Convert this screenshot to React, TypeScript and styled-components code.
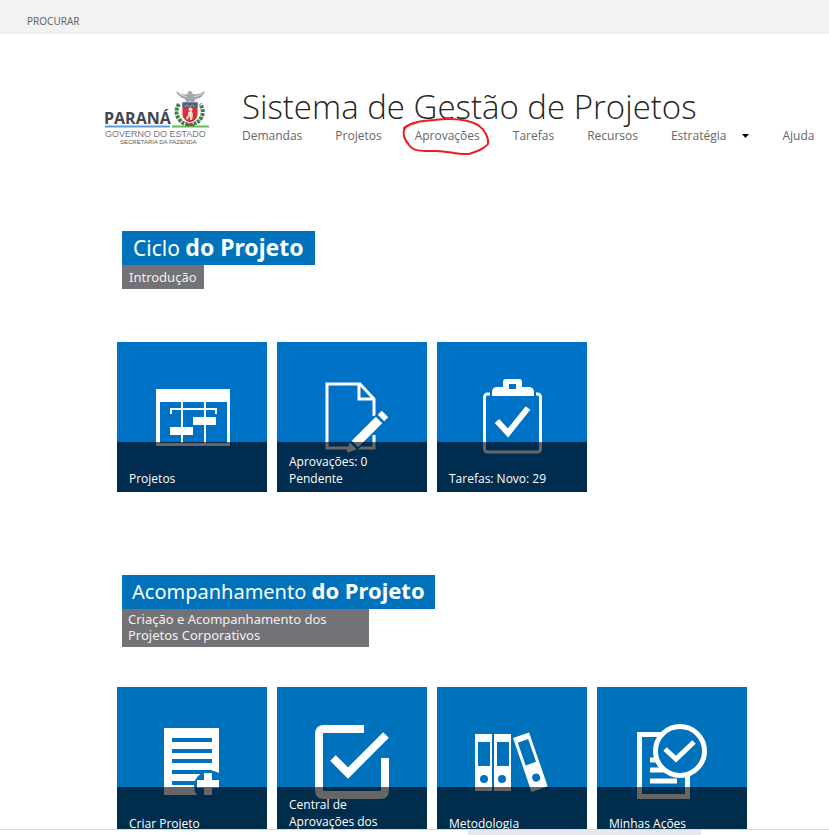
import React from "react";
import styled, { createGlobalStyle } from "styled-components";

const GlobalStyle = createGlobalStyle`
  *, *::before, *::after { box-sizing: border-box; }
  body {
    margin: 0;
    background: #fff;
    color: #262626;
    font-family: "Open Sans", "Noto Sans", sans-serif;
    font-size: 12px;
  }
  h1, h2, p, ul { margin: 0; padding: 0; font-weight: inherit; }
  ul { list-style: none; }
  a { color: inherit; text-decoration: none; }
`;

const Shell = styled.div`
  display: flex;
  flex-direction: column;
  height: 100vh;
  overflow: hidden;
`;

const Ribbon = styled.div`
  flex: none;
  display: flex;
  align-items: flex-end;
  height: 34px;
  padding: 0 20px 4px;
  background: #f2f2f2;
`;

const RibbonTab = styled.button`
  border: 0;
  background: none;
  padding: 0 7px;
  color: #666;
  font: 10px/18px "Noto Sans", sans-serif;
  text-transform: uppercase;
`;

const Page = styled.main`
  flex: 1;
  min-height: 0;
  overflow: hidden;
`;

const Header = styled.header`
  display: flex;
  align-items: flex-start;
  gap: 30px;
  padding: 52px 0 0 102px;
`;

const LogoLink = styled.a`
  flex: none;
  display: block;
  padding-top: 2px;
  svg { display: block; }
`;

const Heading = styled.div`
  min-width: 0;
`;

const Title = styled.h1`
  font-size: 33px;
  font-weight: 300;
  line-height: 41px;
  white-space: nowrap;
`;

const NavList = styled.ul`
  display: flex;
  gap: 33px;
  line-height: 17px;
  color: #666;
  white-space: nowrap;
`;

const NavItem = styled.li`
  position: relative;
  display: flex;
  align-items: center;
  gap: 16px;
`;

const SubmenuButton = styled.button`
  display: flex;
  padding: 0;
  border: 0;
  background: none;
`;

const InkMark = styled.svg`
  position: absolute;
  left: -14px;
  top: -12px;
  pointer-events: none;
`;

const Section = styled.section<{ $top: number }>`
  padding: ${(p) => p.$top}px 0 0 117px;
`;

const Banner = styled.div`
  display: flex;
  flex-direction: column;
  align-items: flex-start;
  padding-left: 5px;
  color: #fff;
  font-family: "Noto Sans", sans-serif;
`;

const BannerTitle = styled.h2<{ $compact?: boolean }>`
  padding: 0 ${(p) => (p.$compact ? 10 : 11)}px;
  background: #0072bc;
  font-size: ${(p) => (p.$compact ? 20 : 21)}px;
  line-height: 34px;
  white-space: nowrap;
  b {
    font-size: ${(p) => (p.$compact ? 22 : 23)}px;
    line-height: 20px;
  }
`;

const BannerNote = styled.p<{ $wide?: boolean }>`
  width: ${(p) => (p.$wide ? "247px" : "auto")};
  padding: ${(p) => (p.$wide ? "2px 6px 4px" : "4px 7px")};
  background: #737277;
  color: #f0f0f0;
  font-size: 13px;
  line-height: 16px;
`;

const Tiles = styled.ul<{ $top: number }>`
  display: flex;
  gap: 10px;
  padding-top: ${(p) => p.$top}px;
`;

const Tile = styled.a<{ $color: string }>`
  position: relative;
  display: block;
  width: 150px;
  height: 150px;
  background: ${(p) => p.$color};
  color: ${(p) => p.$color};
  svg { display: block; }
`;

const Caption = styled.span`
  position: absolute;
  inset: auto 0 0 0;
  display: flex;
  align-items: flex-end;
  height: 50px;
  padding: 0 12px 5px;
  background: rgba(0, 0, 0, 0.6);
  color: #fff;
  line-height: 17px;
`;

const CaptionText = styled.span`
  max-width: 100px;
`;

const LowCaption = styled(Caption)`
  align-items: flex-start;
  padding-top: 9px;
`;

const Footer = styled.div`
  flex: none;
  height: 6px;
  padding-left: 468px;
  border-top: 1px solid #dcdcdc;
`;

const ScrollThumb = styled.div`
  width: 233px;
  height: 5px;
  background: #e8e8ec;
`;

function ParanaLogo() {
  return (
    <svg width="110" height="58" viewBox="0 0 110 58" role="img" aria-label="Paraná - Governo do Estado - Secretaria da Fazenda">
      <text x="2" y="36" fontFamily="Open Sans, sans-serif" fontWeight="700" fontSize="16" fill="#3f464e">PARANÁ</text>
      <rect x="3" y="37.5" width="65" height="2" fill="#5a9bd8" />
      <rect x="70" y="37.5" width="37" height="2" fill="#62ba5c" />
      <text x="3" y="49" fontFamily="Liberation Sans, sans-serif" fontSize="9" fill="#73777b">GOVERNO DO ESTADO</text>
      <text x="18" y="56" fontFamily="Liberation Sans, sans-serif" fontSize="6" fill="#55585b">SECRETARIA DA FAZENDA</text>
      <path d="M77 16Q72 24 77 31Q81 37 88 36Q96 36 99 30Q103 23 98 16" fill="none" stroke="#3f7f49" strokeWidth="4" strokeDasharray="3 1" />
      <path d="M88 35L86 38M88 35L92 38" stroke="#a43c35" strokeWidth="2" />
      <path d="M80 14H96V27Q95 33 88 35Q81 33 80 27Z" fill="#d72f35" stroke="#f2f2f2" />
      <path d="M80.500 14.500H95.500V19.500H80.500Z" fill="#3763a1" />
      <path d="M83 19Q85 15 87 19M88 19Q90 15 93 19" fill="none" stroke="#d4a55e" />
      <circle cx="88.500" cy="21.500" r="2" fill="#f8d8d3" />
      <path d="M86 24L90 23L91 27L90 32H88L88 28L85 32L84 30L86 27Z" fill="#f8d8d3" />
      <path d="M74 3Q81 8 85 6L87 3L89 3L91 6Q96 7 103 3Q101 10 94 11L91 15L88 13L85 15L83 11Q76 9 74 3Z" fill="#a5a8aa" />
      <path d="M77 6L85 9M100 6L92 9" stroke="#d9dbdc" />
    </svg>
  );
}

type IconName = "gantt" | "edit" | "clipboard" | "create" | "check" | "binders" | "review";

const drawings: Record<IconName, React.ReactNode> = {
  gantt: (
    <>
      <path fill="#fff" fillRule="evenodd" d="M39 47H113V104H39ZM43 60V101H110V60Z" />
      <path d="M65 60V76M65 93V101M88 60V75M88 83V101" stroke="#fff" strokeWidth="2" />
      <path d="M65 76V85" stroke="#fff" strokeWidth="2" />
      <path d="M54 72V67H99V72" fill="none" stroke="#fff" strokeWidth="2" />
      <path d="M53 85H76V93H53ZM76 75H99V83H76Z" fill="#fff" />
    </>
  ),
  edit: (
    <>
      <path d="M97 74V57L83 42H50V106H97V93" fill="none" stroke="#fff" strokeWidth="3" />
      <path d="M82 42V57H97" fill="none" stroke="#fff" strokeWidth="3" />
      <path d="M73 107L108 72" stroke="currentColor" strokeWidth="12" />
      <path d="M78 102L102 78" stroke="#fff" strokeWidth="9" />
      <path d="M104 76L108 72" stroke="#fff" strokeWidth="9" />
      <path d="M73 101L79 107L71 110L70 109Z" fill="#fff" stroke="#fff" />
    </>
  ),
  clipboard: (
    <>
      <rect x="47.500" y="52" width="56" height="58" rx="3" fill="none" stroke="#fff" strokeWidth="3" />
      <path d="M53 48H99V56H53Z" fill="currentColor" />
      <path fill="#fff" fillRule="evenodd" d="M55 54V49Q56 45 60 45H66V40Q66 37 69 37H82Q85 37 85 40V45H92Q96 45 97 49V54ZM72 42V47H79V42Z" />
      <path d="M60 79L71 91L91 66" fill="none" stroke="#fff" strokeWidth="6" />
    </>
  ),
  create: (
    <>
      <path d="M47 41H102V108H47Z" fill="#fff" />
      <path d="M55 53H95M55 64H95M55 74H95M55 85H95M55 96H95" stroke="currentColor" strokeWidth="4" />
      <path d="M102 86Q94 81 85 86Q77 91 77 99Q77 104 80 108H102Z" fill="currentColor" />
      <path d="M80 97H102M91 86V108" stroke="#fff" strokeWidth="8" />
    </>
  ),
  check: (
    <>
      <path d="M87 42H47Q42 42 42 47V103Q42 108 47 108H103Q108 108 108 103V71" fill="none" stroke="#fff" strokeWidth="8" />
      <path d="M56 71L71 86L109 48" fill="none" stroke="#fff" strokeWidth="8" />
    </>
  ),
  binders: (
    <>
      <path fill="#fff" fillRule="evenodd" d="M38 47H55V104H38ZM41 55V79H53V55ZM57 47H74V104H57ZM60 55V79H72V55Z" />
      <circle cx="47" cy="92" r="4" fill="currentColor" />
      <circle cx="65" cy="92" r="4" fill="currentColor" />
      <g transform="translate(76 51) rotate(-19)">
        <path d="M0 0H17V57H0Z" fill="#fff" />
        <path d="M3 6H14V30H3Z" fill="currentColor" />
        <circle cx="9" cy="45" r="4" fill="currentColor" />
      </g>
    </>
  ),
  review: (
    <>
      <path d="M42.500 47.500H90.500V109.500H42.500Z" fill="none" stroke="#fff" strokeWidth="5" />
      <path d="M53 73H64M53 83H72M53 94H80" stroke="#fff" strokeWidth="5" />
      <circle cx="83" cy="64" r="24.500" fill="currentColor" stroke="#fff" strokeWidth="5" />
      <path d="M68 62L79 72L97 55" fill="none" stroke="#fff" strokeWidth="5" />
    </>
  ),
};

interface TileData {
  icon: IconName;
  label: string;
  low?: boolean;
}

const cycle: TileData[] = [
  { icon: "gantt", label: "Projetos" },
  { icon: "edit", label: "Aprovações: 0 Pendente" },
  { icon: "clipboard", label: "Tarefas: Novo: 29" },
];

const tracking: TileData[] = [
  { icon: "create", label: "Criar Projeto" },
  { icon: "check", label: "Central de Aprovações dos", low: true },
  { icon: "binders", label: "Metodologia" },
  { icon: "review", label: "Minhas Ações" },
];

function TileRow({ items, color, top }: { items: TileData[]; color: string; top: number }) {
  return (
    <Tiles $top={top}>
      {items.map(({ icon, label, low }) => {
        const Label = low ? LowCaption : Caption;
        return (
          <li key={label}>
            <Tile href="#" $color={color}>
              <svg width="150" height="150" viewBox="0 0 150 150" aria-hidden="true">
                {drawings[icon]}
              </svg>
              <Label><CaptionText>{label}</CaptionText></Label>
            </Tile>
          </li>
        );
      })}
    </Tiles>
  );
}

const navigation = ["Demandas", "Projetos", "Aprovações", "Tarefas", "Recursos", "Estratégia", "Ajuda"];

export default function App() {
  return (
    <>
      <GlobalStyle />
      <Shell>
        <Ribbon>
          <RibbonTab type="button">Procurar</RibbonTab>
        </Ribbon>
        <Page>
          <Header>
            <LogoLink href="#"><ParanaLogo /></LogoLink>
            <Heading>
              <Title>Sistema de Gestão de Projetos</Title>
              <nav>
                <NavList>
                  {navigation.map((name) => (
                    <NavItem key={name}>
                      <a href="#">{name}</a>
                      {name === "Estratégia" && (
                        <SubmenuButton type="button" aria-label="Abrir submenu de Estratégia">
                          <svg width="7" height="4" viewBox="0 0 7 4"><path d="M0 0H7L3.500 4Z" fill="#000" /></svg>
                        </SubmenuButton>
                      )}
                      {name === "Aprovações" && (
                        <InkMark width="92" height="42" viewBox="0 0 92 42" aria-hidden="true">
                          <path d="M3 13C10 7 20 6 33 5C50 3 66 4 77 10C84 15 88 23 87 29C83 34 77 36 68 39C57 40 47 36 36 36C22 36 13 37 8 30C2 23 1 16 5 12C10 8 14 8 18 7" fill="none" stroke="#ed1c24" strokeWidth="2" strokeLinecap="round" />
                        </InkMark>
                      )}
                    </NavItem>
                  ))}
                </NavList>
              </nav>
            </Heading>
          </Header>

          <Section $top={85}>
            <Banner>
              <BannerTitle>Ciclo <b>do Projeto</b></BannerTitle>
              <BannerNote>Introdução</BannerNote>
            </Banner>
            <TileRow items={cycle} color="#0072c6" top={53} />
          </Section>

          <Section $top={83}>
            <Banner>
              <BannerTitle $compact>Acompanhamento <b>do Projeto</b></BannerTitle>
              <BannerNote $wide>Criação e Acompanhamento dos Projetos Corporativos</BannerNote>
            </Banner>
            <TileRow items={tracking} color="#0072bc" top={40} />
          </Section>
        </Page>
        <Footer><ScrollThumb /></Footer>
      </Shell>
    </>
  );
}
